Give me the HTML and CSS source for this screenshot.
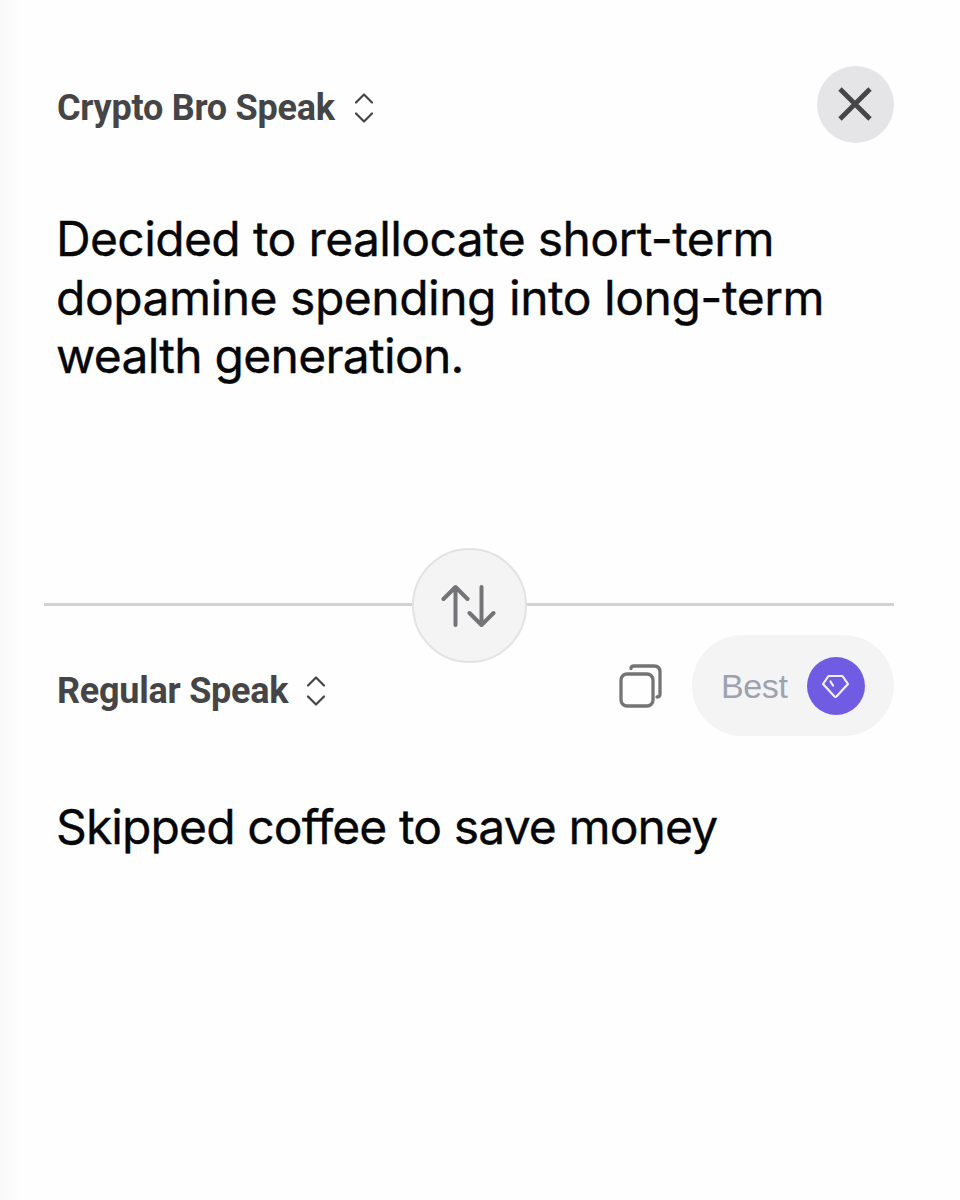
FILE: index.html
```html
<!DOCTYPE html>
<html lang="en">
<head>
<meta charset="utf-8">
<title>Translator</title>
<link rel="stylesheet" href="styles.css">
</head>
<body>
<main class="translator">
  <section class="panel source">
    <header class="bar source-bar">
      <button class="language">Crypto Bro Speak
        <svg class="chevrons" viewBox="0 0 20 32"><path d="M2 10.500 10 2.500l8 8M2 21.500l8 8 8-8"/></svg>
      </button>
      <button class="close" aria-label="Close">
        <svg viewBox="0 0 36 36"><path d="M2 3 32 33M32 3 2 33"/></svg>
      </button>
    </header>
    <p class="text"><span class="line l1">Decided to reallocate short-term</span><span class="line l2">dopamine spending into long-term</span><span class="line l3">wealth generation.</span></p>
  </section>
  <div class="divider">
    <button class="swap" aria-label="Swap">
      <svg viewBox="0 0 56 44"><path d="M14.500 41V3M2.500 15 14.500 3l12 12M40.500 3v38M28.500 29l12 12 12-12"/></svg>
    </button>
  </div>
  <section class="panel">
    <header class="bar target-bar">
      <button class="language">Regular Speak
        <svg class="chevrons" viewBox="0 0 20 32"><path d="M2 10.500 10 2.500l8 8M2 21.500l8 8 8-8"/></svg>
      </button>
      <div class="actions">
        <svg class="copy" viewBox="0 0 46 46"><rect x="3" y="11" width="32" height="32" rx="6"/><path d="M13 5.500Q13 3 16 3h20q6 0 6 6v22q0 3-3 3"/></svg>
        <button class="best">Best
          <span class="gem"><svg viewBox="0 0 30 26"><path d="M7.500 3h14L27 11 15.700 23.200Q14.500 24.400 13.300 23.200L2 11z"/><path d="M9.500 8.500 12 12.500"/></svg></span>
        </button>
      </div>
    </header>
    <p class="text"><span class="line l4">Skipped coffee to save money</span></p>
  </section>
</main>
</body>
</html>
```
FILE: styles.css
```css
* { box-sizing: border-box; }
body { margin: 0; background: #fefefe; }
button { border: 0; margin: 0; padding: 0; background: none; font: inherit; color: inherit; }
svg { display: block; fill: none; stroke: currentColor; stroke-linecap: round; stroke-linejoin: round; }

.translator {
  height: 1200px;
  padding: 65px 66px 0 44px;
  background: linear-gradient(90deg, #f9f9f9 0, #fefefe 26px);
  overflow: hidden;
}
.panel { padding-left: 13px; }
.source { height: 483px; }
.bar { display: flex; justify-content: space-between; align-items: center; }
.source-bar { height: 78px; }
.target-bar { height: 101px; margin-top: -28px; }

.language {
  display: flex;
  align-items: center;
  gap: 19px;
  padding-top: 7px;
  font: 700 36px/42px Roboto, sans-serif;
  letter-spacing: -0.25px;
  color: #454548;
  white-space: nowrap;
}
.target-bar .language { padding-top: 10px; gap: 18px; }
.chevrons { width: 20px; height: 32px; stroke-width: 2.2; }

.close {
  display: grid;
  place-items: center;
  width: 77px;
  height: 77px;
  border-radius: 50%;
  background: #e5e5e8;
  color: #464649;
}
.close svg { width: 36px; height: 36px; stroke-width: 4.8; stroke-linecap: butt; }

.text {
  margin: 67px 0 0 -1px;
  font: 400 48px/58.700px Inter, sans-serif;
  -webkit-text-stroke: 0.35px #060606;
  color: #060606;
}
.target-bar + .text { margin-top: 62px; }
.line { display: block; white-space: nowrap; }
.l1 { letter-spacing: -0.63px; }
.l2 { letter-spacing: -0.49px; }
.l3 { letter-spacing: -0.73px; }
.l4 { letter-spacing: -0.89px; }

.divider {
  display: flex;
  justify-content: center;
  background: linear-gradient(#d2d2d4, #d2d2d4) 0 55px / 100% 3px no-repeat;
}
.swap {
  display: grid;
  place-items: center;
  width: 115px;
  height: 115px;
  border: 2px solid #e3e3e4;
  border-radius: 50%;
  background: #f4f4f4;
  color: #747478;
}
.swap svg { width: 56px; height: 44px; stroke-width: 4; }

.actions { display: flex; align-items: center; gap: 28px; }
.copy { width: 46px; height: 46px; stroke-width: 3.3; color: #747476; }
.best {
  display: flex;
  align-items: center;
  justify-content: space-between;
  width: 202px;
  height: 101px;
  padding: 0 29px;
  border-radius: 51px;
  background: #f4f4f5;
  font: 400 34px/40px "Liberation Sans", sans-serif;
  letter-spacing: -0.4px;
  color: #9ca3af;
}
.gem {
  display: grid;
  place-items: center;
  width: 58px;
  height: 58px;
  border-radius: 50%;
  background: #6f5ce3;
  color: #f2efff;
}
.gem svg { width: 30px; height: 26px; stroke-width: 2.2; }
```
